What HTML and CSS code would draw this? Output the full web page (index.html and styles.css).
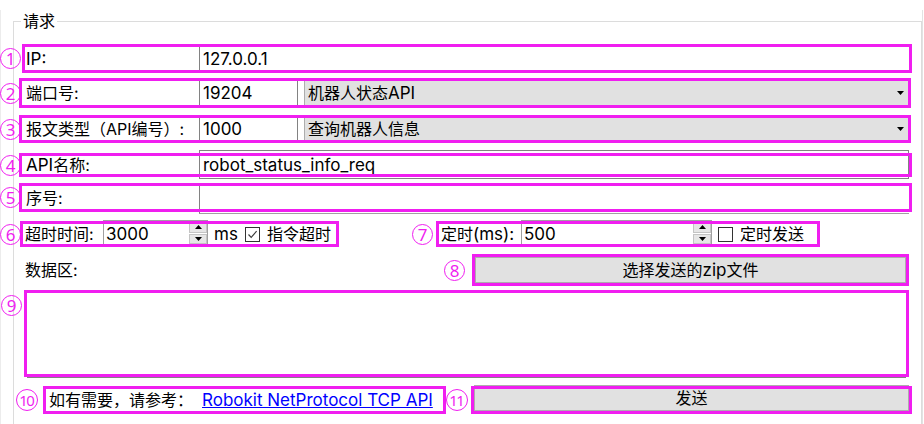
FILE: index.html
```html
<!DOCTYPE html>
<html lang="zh-CN">
<head>
<meta charset="utf-8">
<title>请求</title>
<link rel="stylesheet" href="styles.css">
</head>
<body>
<div class="window">
  <fieldset class="group">
    <legend class="group-title">请求</legend>

    <div class="row row-ip">
      <span class="num">1</span>
      <div class="box box-ip">
        <span class="label label-ip"><span class="latin">IP:</span></span>
        <div class="field"><span class="latin">127.0.0.1</span></div>
      </div>
    </div>

    <div class="row row-port">
      <span class="num">2</span>
      <div class="box box-port">
        <span class="label">端口号:</span>
        <div class="field field-short"><span class="latin">19204</span></div>
        <div class="combo">
          <span>机器人状态<span class="latin">API</span></span>
          <svg class="combo-arrow" width="7" height="4" viewBox="0 0 7 4"><polygon points="0,0 7,0 3.5,4" fill="#000"/></svg>
        </div>
      </div>
    </div>

    <div class="row row-type">
      <span class="num">3</span>
      <div class="box box-type">
        <span class="label">报文类型（API编号）:</span>
        <div class="field field-short"><span class="latin">1000</span></div>
        <div class="combo">
          <span>查询机器人信息</span>
          <svg class="combo-arrow" width="7" height="4" viewBox="0 0 7 4"><polygon points="0,0 7,0 3.5,4" fill="#000"/></svg>
        </div>
      </div>
    </div>

    <div class="row row-name">
      <span class="num">4</span>
      <div class="box box-name">
        <span class="label"><span class="latin">API</span>名称:</span>
        <div class="field field-name"><span class="latin">robot_status_info_req</span></div>
      </div>
    </div>

    <div class="row row-seq">
      <span class="num">5</span>
      <div class="box box-seq">
        <span class="label">序号:</span>
        <div class="field field-seq"></div>
      </div>
    </div>

    <div class="row row-time">
      <span class="num">6</span>
      <div class="box box-timeout">
        <span class="label label-timeout">超时时间:</span>
        <div class="spin spin-timeout">
          <span class="spin-value"><span class="latin">3000</span></span>
          <span class="spin-btns">
            <span class="spin-btn"><svg width="7" height="4" viewBox="0 0 7 4"><polygon points="0,4 7,4 3.5,0" fill="#000"/></svg></span>
            <span class="spin-btn"><svg width="7" height="4" viewBox="0 0 7 4"><polygon points="0,0 7,0 3.5,4" fill="#000"/></svg></span>
          </span>
        </div>
        <span class="unit latin">ms</span>
        <span class="check"><svg width="13" height="13" viewBox="0 0 13 13"><polyline points="2.5,6.5 5.2,9.4 10.6,3.2" fill="none" stroke="#3c3c3c" stroke-width="1.2"/></svg></span>
        <span class="check-label">指令超时</span>
      </div>

      <span class="num num-timer">7</span>
      <div class="box box-timer">
        <span class="label label-timer">定时<span class="latin">(ms):</span></span>
        <div class="spin spin-timer">
          <span class="spin-value"><span class="latin">500</span></span>
          <span class="spin-btns">
            <span class="spin-btn"><svg width="7" height="4" viewBox="0 0 7 4"><polygon points="0,4 7,4 3.5,0" fill="#000"/></svg></span>
            <span class="spin-btn"><svg width="7" height="4" viewBox="0 0 7 4"><polygon points="0,0 7,0 3.5,4" fill="#000"/></svg></span>
          </span>
        </div>
        <span class="check check-empty"></span>
        <span class="check-label">定时发送</span>
      </div>
    </div>

    <div class="row row-data">
      <span class="data-label">数据区:</span>
      <span class="num num-zip">8</span>
      <div class="box box-zip">
        <div class="btn">选择发送的<span class="latin">zip</span>文件</div>
      </div>
    </div>

    <div class="row row-area">
      <span class="num num-area">9</span>
      <div class="box box-area">
        <div class="textarea"></div>
      </div>
    </div>

    <div class="row row-bottom">
      <span class="num num-wide num-help">10</span>
      <div class="box box-help">
        <span class="help-text">如有需要，请参考：</span><a class="help-link latin" href="#">Robokit NetProtocol TCP API</a>
      </div>
      <span class="num num-wide num-send">11</span>
      <div class="box box-send">
        <div class="btn btn-send">发送</div>
      </div>
    </div>
  </fieldset>
</div>
</body>
</html>
```

FILE: styles.css
```css
* {
  box-sizing: border-box;
}

html,
body {
  margin: 0;
  background: #ffffff;
}

body {
  font-family: Inter, "Noto Sans CJK SC", sans-serif;
  font-size: 16px;
  line-height: 20px;
  color: #000000;
  overflow: hidden;
}

.latin {
  font-size: 17px;
}

.window {
  width: 923px;
  height: 414px;
  margin-top: 10px;
  padding-top: 3px;
  border-left: 1px solid #ececec;
  border-right: 1px solid #e3e3e3;
}

.group {
  margin: 0 0 0 12px;
  padding: 0;
  width: 909px;
  height: 430px;
  min-width: 0;
  border: 1px solid #dcdcdc;
}

.group-title {
  margin-left: 7px;
  padding: 0 2px;
  font-size: 16px;
  line-height: 16px;
}

/* rows */
.row {
  display: flex;
  align-items: center;
  margin-left: -14px;
}

.row-ip { margin-top: 15px; }
.row-port { margin-top: 5px; }
.row-type { margin-top: 7px; }
.row-name { margin-top: 10px; }
.row-seq { margin-top: 6px; }
.row-time { margin-top: 9px; }
.row-data { margin-top: 7px; }
.row-area { margin-top: 4px; align-items: flex-start; }
.row-bottom { margin-top: 9px; }

/* annotation circles */
.num {
  flex: none;
  width: 21px;
  height: 21px;
  border: 1.5px solid #f01ef0;
  border-radius: 50%;
  color: #f01ef0;
  font-family: "Noto Sans", sans-serif;
  font-size: 17px;
  line-height: 17px;
  display: flex;
  align-items: center;
  justify-content: center;
}

.num-wide {
  width: 22px;
  height: 22px;
  font-size: 15px;
  letter-spacing: -1.5px;
  text-indent: -1.5px;
}

.num-timer { margin-left: 73px; }
.num-zip { margin-left: auto; }
.num-area { margin-left: 1px; margin-top: 5px; }
.num-help { margin-left: 16px; }

/* annotation boxes */
.box {
  position: relative;
  display: flex;
  align-items: center;
  padding: 3px;
}

.box::after {
  content: "";
  position: absolute;
  inset: 0;
  border: 3px solid #f01ef0;
  pointer-events: none;
}

.box-ip { flex: 1; margin-left: 1px; margin-right: 9px; height: 29px; }
.box-port { flex: 1; margin-left: -2px; margin-right: 10px; height: 30px; }
.box-type { flex: 1; margin-left: -2px; margin-right: 10px; height: 28px; }
.box-name { flex: 1; margin-left: -2px; margin-right: 9px; height: 24px; }
.box-seq { flex: 1; margin-left: -2px; margin-right: 9px; height: 29px; }
.box-timeout { width: 319px; height: 26px; margin-left: -1px; }
.box-timer { width: 384px; height: 26px; margin-left: 3px; }
.box-zip { width: 437px; height: 32px; margin-left: 7px; margin-right: 12px; }
.box-area { width: 885px; height: 87px; margin-left: 2px; }
.box-help { width: 403px; height: 28px; margin-left: 5px; padding-left: 6px; }
.box-send { flex: 1; height: 28px; margin-left: 3px; margin-right: 9px; }

/* form widgets */
.label {
  flex: none;
  width: 177px;
  padding-left: 4px;
  white-space: nowrap;
}

.label-ip {
  width: 174px;
  padding-left: 1px;
}

.label-timeout {
  width: 80px;
  padding-left: 2px;
}

.label-timer {
  width: 82px;
  padding-left: 2px;
}

.field {
  flex: 1;
  align-self: stretch;
  display: flex;
  align-items: center;
  padding-left: 3px;
  border-left: 1px solid #828282;
  background: #ffffff;
  white-space: nowrap;
}

.field-short {
  flex: none;
  width: 99px;
  border-right: 1px solid #828282;
}

.field-name {
  margin: -6px 0 -5px;
  border: 1px solid #828282;
}

.field-seq {
  margin-bottom: -5px;
  border-bottom: 1px solid #a0a0a0;
}

.combo {
  flex: 1;
  align-self: stretch;
  margin-left: 6px;
  padding: 0 4px 0 3px;
  display: flex;
  align-items: center;
  justify-content: space-between;
  border-left: 1px solid #adadad;
  background: #e1e1e1;
  white-space: nowrap;
}

.combo-arrow {
  flex: none;
  display: block;
}

.spin {
  flex: none;
  align-self: stretch;
  display: flex;
  margin-top: -4px;
  border: 1px solid #a0a0a0;
  border-bottom: none;
  background: #ffffff;
}

.spin-timeout { width: 105px; }
.spin-timer { width: 191px; }

.spin-value {
  flex: 1;
  display: flex;
  align-items: center;
  padding: 3px 0 0 2px;
}

.spin-btns {
  flex: none;
  width: 18px;
  display: flex;
  flex-direction: column;
  padding: 1px 0 0;
  gap: 1px;
}

.spin-btn {
  flex: 1;
  display: flex;
  align-items: center;
  justify-content: center;
  background: #e6e6e6;
  border: 1px solid #c4c4c4;
}

.spin-btn svg {
  display: block;
}

.unit {
  margin-left: 6px;
}

.check {
  flex: none;
  width: 15px;
  height: 15px;
  margin-left: 7px;
  border: 1px solid #333333;
  background: #ffffff;
  display: flex;
}

.check-empty {
  margin-left: 6px;
}

.check svg {
  display: block;
}

.check-label {
  margin-left: 7px;
  white-space: nowrap;
}

.data-label {
  margin-left: 25px;
  white-space: nowrap;
}

.btn {
  flex: 1;
  align-self: stretch;
  display: flex;
  align-items: center;
  justify-content: center;
  background: #e1e1e1;
  border: 1px solid #adadad;
  white-space: nowrap;
}

.btn-send {
  margin-top: -4px;
}

.textarea {
  flex: 1;
  align-self: stretch;
  margin-bottom: -4px;
  border-bottom: 1px solid #828282;
  background: #ffffff;
}

.help-text {
  white-space: nowrap;
}

.help-link {
  margin-left: 9px;
  color: #0000ff;
  text-decoration: underline;
  white-space: nowrap;
}
```
